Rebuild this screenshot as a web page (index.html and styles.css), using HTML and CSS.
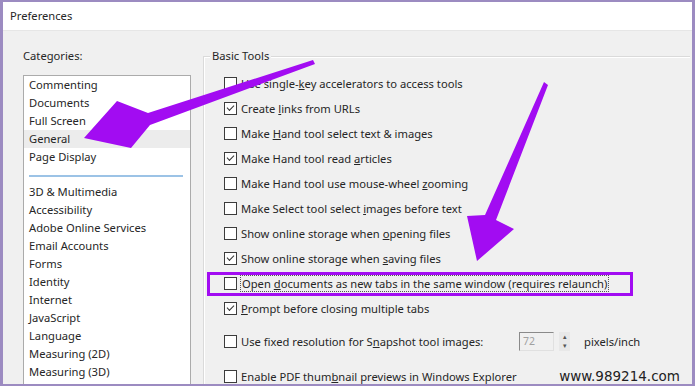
FILE: index.html
```html
<!DOCTYPE html>
<html lang="en">
<head>
  <meta charset="UTF-8">
  <title>Preferences</title>
  <link rel="stylesheet" href="styles.css">
</head>
<body>

  <div class="frame">
    <div class="titlebar">Preferences</div>

    <div class="main">
      <div class="categories">
        <div class="label">Categories:</div>
        <div class="list">
          <div class="item">Commenting</div>
          <div class="item">Documents</div>
          <div class="item">Full Screen</div>
          <div class="item selected">General</div>
          <div class="item">Page Display</div>
          <div class="sep"></div>
          <div class="item">3D &amp; Multimedia</div>
          <div class="item">Accessibility</div>
          <div class="item">Adobe Online Services</div>
          <div class="item">Email Accounts</div>
          <div class="item">Forms</div>
          <div class="item">Identity</div>
          <div class="item">Internet</div>
          <div class="item">JavaScript</div>
          <div class="item">Language</div>
          <div class="item">Measuring (2D)</div>
          <div class="item">Measuring (3D)</div>
        </div>
      </div>

      <div class="group">
        <div class="group-title">Basic Tools</div>
        <div class="rows">
          <div class="row"><span class="box"></span><span>Use single-<u>k</u>ey accelerators to access tools</span></div>
          <div class="row"><span class="box checked"></span><span>Create <u>l</u>inks from URLs</span></div>
          <div class="row"><span class="box"></span><span>Make <u>H</u>and tool select text &amp; images</span></div>
          <div class="row"><span class="box checked"></span><span>Make Hand tool read <u>a</u>rticles</span></div>
          <div class="row"><span class="box"></span><span>Make Hand tool use mouse-wheel <u>z</u>ooming</span></div>
          <div class="row"><span class="box"></span><span>Make Select tool select <u>i</u>mages before text</span></div>
          <div class="row"><span class="box"></span><span>Show online storage when <u>o</u>pening files</span></div>
          <div class="row"><span class="box checked"></span><span>Show online storage when <u>s</u>aving files</span></div>
          <div class="row marked"><span class="box"></span><span class="focus">Open <u>d</u>ocuments as new tabs in the same window (requires relaunch)</span></div>
          <div class="row"><span class="box checked"></span><span><u>P</u>rompt before closing multiple tabs</span></div>
          <div class="row spaced">
            <span class="box"></span>
            <span class="fixed-label">Use fixed resolution for S<u>n</u>apshot tool images:</span>
            <span class="spin">72</span>
            <span class="spinner"><i>&#9652;</i><i>&#9662;</i></span>
            <span class="unit">pixels/inch</span>
          </div>
          <div class="row spaced last"><span class="box"></span><span>Enable PDF thum<u>b</u>nail previews in Windows Explorer</span></div>
        </div>
      </div>
    </div>

    <svg class="arrows" width="695" height="386" viewBox="0 0 695 386">
      <polygon points="313,60 148,113 117,101 84,138 131,148 150,125 315,64"/>
      <polygon points="544,82 485,215 467,216 477,261 514,229 496,220 548,85"/>
    </svg>

    <div class="watermark">www.989214.com</div>
  </div>

</body>
</html>
```

FILE: styles.css
```css
body {
  margin: 0;
  font-family: "Noto Sans", Arial, sans-serif;
  font-size: 11.2px;
  color: #262626;
}
.frame {
  position: relative;
  width: 695px;
  height: 386px;
  box-sizing: border-box;
  border: 2px solid #9c8bc1;
  border-left-width: 3px;
  border-right-width: 3px;
  background: #f0f0f0;
  display: flex;
  flex-direction: column;
  overflow: hidden;
}
.titlebar {
  height: 28px;
  line-height: 28px;
  padding-left: 7px;
  background: #fff;
  border-bottom: 1px solid #e6e6e6;
  flex-shrink: 0;
}
.main {
  flex: 1;
  display: flex;
  padding-top: 17px;
  min-height: 0;
}
.categories {
  margin-left: 20px;
  width: 168px;
  display: flex;
  flex-direction: column;
}
.label {
  line-height: 16px;
  margin-bottom: 11px;
}
.list {
  flex: 1;
  background: #fff;
  border: 1px solid #ababab;
  border-bottom: none;
  overflow: hidden;
}
.item {
  line-height: 18px;
  padding-left: 5px;
  white-space: nowrap;
}
.item.selected {
  background: #ececec;
}
.sep {
  height: 2px;
  background: #9cc3e6;
  margin: 9px 7px 6px 5px;
}
.group {
  flex: 1;
  margin-left: 12px;
  margin-right: 2px;
  margin-top: 8px;
  border-top: 1px solid #dadada;
  border-left: 1px solid #dadada;
  box-shadow: inset 1px 1px 0 #fff;
}
.group-title {
  width: max-content;
  line-height: 16px;
  margin-top: -9px;
  margin-left: 6px;
  padding: 0 2px;
  background: #f0f0f0;
}
.rows {
  padding-left: 20px;
  margin-top: 7px;
}
.row {
  position: relative;
  height: 25px;
  display: flex;
  align-items: center;
  white-space: nowrap;
}
.row.spaced {
  margin-top: 8px;
}
.row.last {
  margin-top: 10px;
}
.box {
  width: 11px;
  height: 11px;
  border: 1px solid #3c3c3c;
  background: #fff;
  margin-right: 4px;
  flex-shrink: 0;
  position: relative;
}
.box.checked::after {
  content: "";
  position: absolute;
  left: 2px;
  top: 2px;
  width: 6px;
  height: 3px;
  border-left: 1px solid #333;
  border-bottom: 1px solid #333;
  transform: rotate(-45deg);
}
.marked::after {
  content: "";
  position: absolute;
  left: -17px;
  top: 1px;
  width: 420px;
  height: 18px;
  border: 3px solid #a20cf2;
}
.focus {
  outline: 1px dotted #555;
  padding: 0 1px;
}
.fixed-label {
  width: 278px;
}
.spin {
  width: 30px;
  height: 17px;
  line-height: 17px;
  padding-left: 3px;
  border-top: 1px solid #8a8a8a;
  border-left: 1px solid #8a8a8a;
  border-right: 1px solid #e0e0e0;
  border-bottom: 1px solid #e0e0e0;
  color: #a0a0a0;
  background: #f0f0f0;
  font-size: 10.5px;
}
.spinner {
  display: flex;
  flex-direction: column;
  width: 11px;
  height: 19px;
  margin-left: 5px;
  background: #e8e8e8;
  font-size: 7px;
  line-height: 9px;
  text-align: center;
  color: #555;
}
.spinner i {
  font-style: normal;
}
.unit {
  margin-left: 14px;
}
.arrows {
  position: absolute;
  left: -3px;
  top: -2px;
  fill: #a20cf2;
}
.watermark {
  position: absolute;
  right: 12px;
  bottom: 0;
  font-family: "DejaVu Sans", sans-serif;
  font-size: 13.5px;
  color: #222;
}
```
